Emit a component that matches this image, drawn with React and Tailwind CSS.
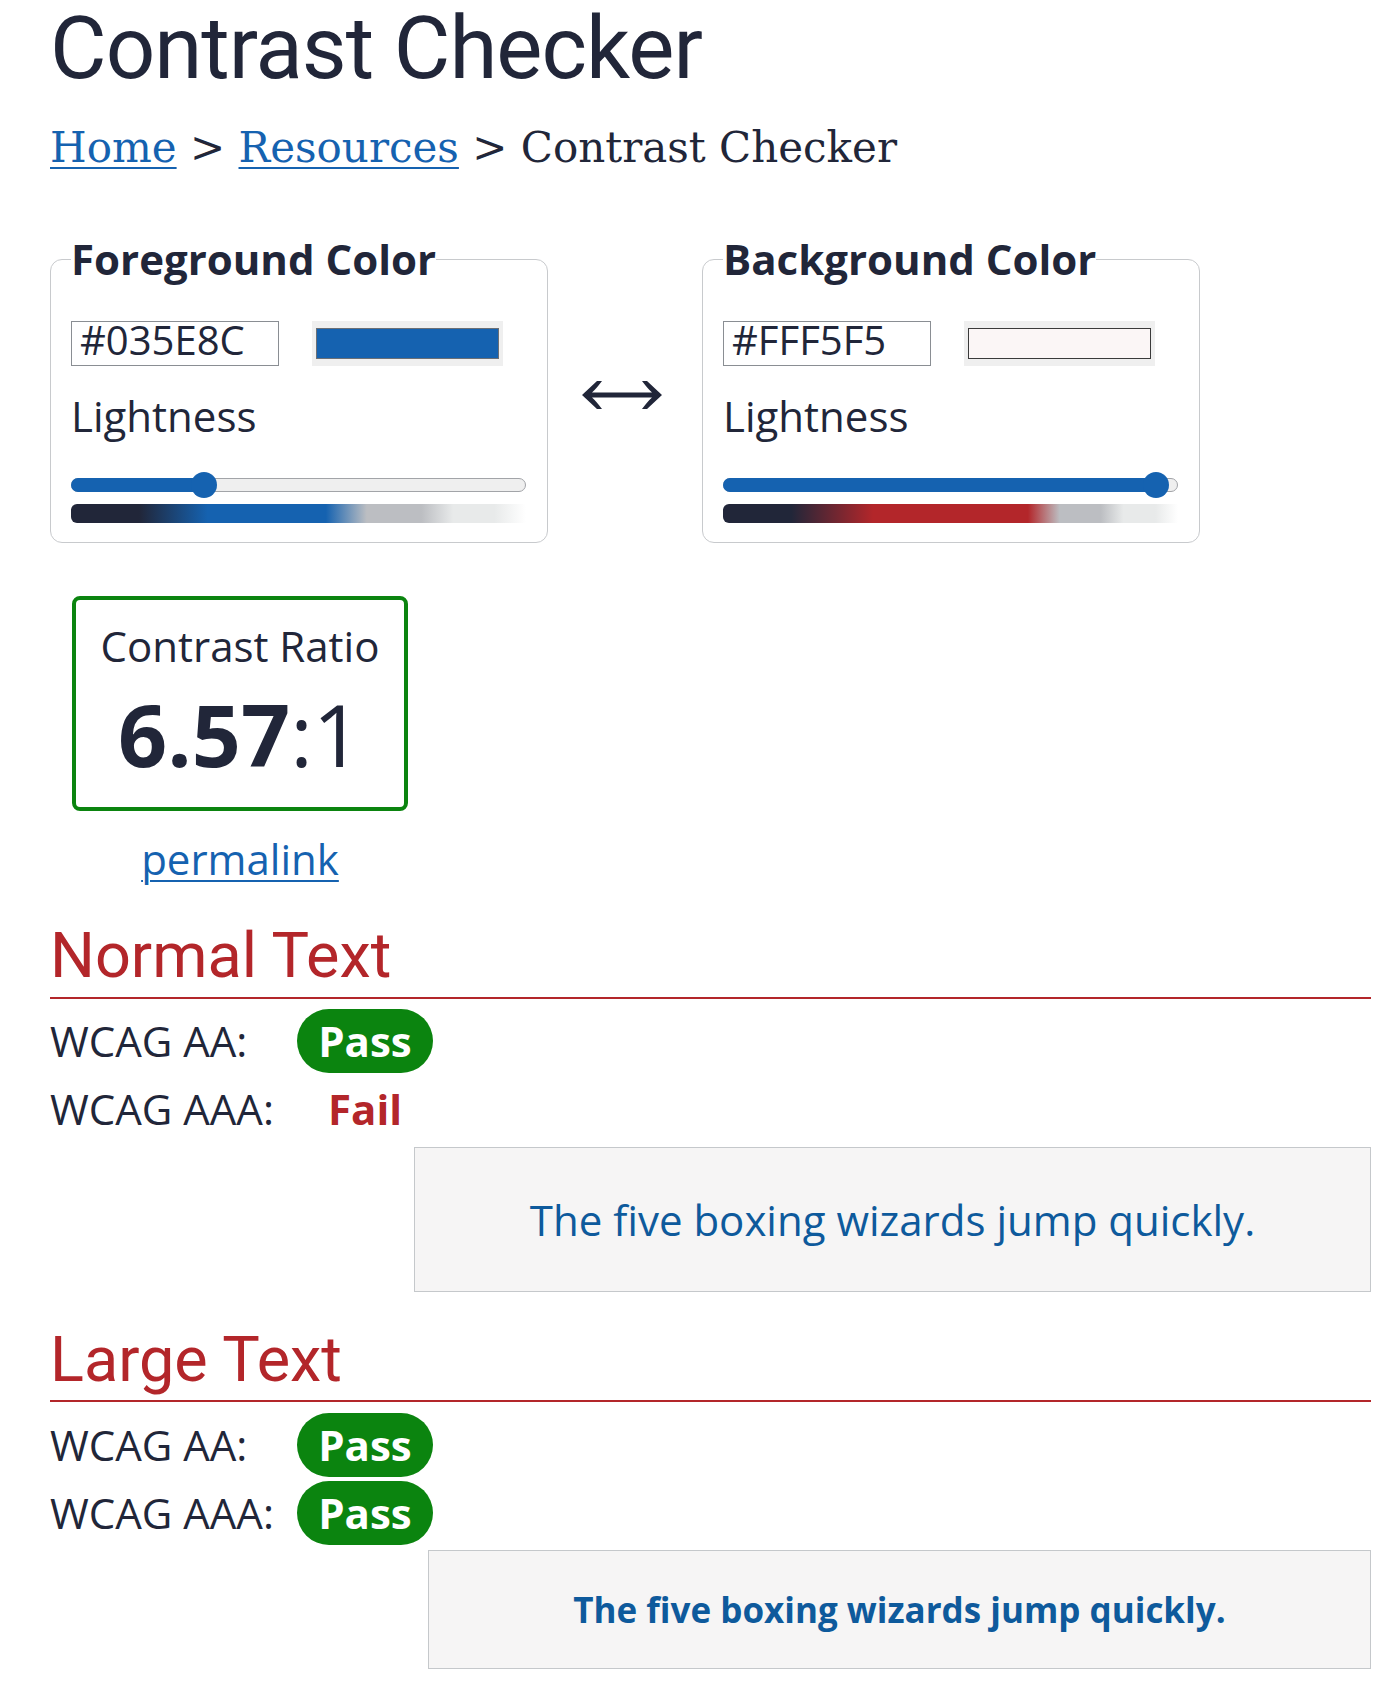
import React from 'react';

const NAVY = 'text-[#212639]';

// lightness slider: thumb moves across (width - thumb)
function Slider({ pct }) {
  const pos = 13 + pct * (455 - 26);
  return (
    <div className="relative mt-[35px] h-[26px] w-[455px]">
      <div className="absolute left-0 right-0 top-[6px] h-[14px] rounded-full border border-[#a2a4a8] bg-[#efefef]" />
      <div
        className="absolute left-0 top-[6px] h-[14px] rounded-l-full bg-[#1562b0]"
        style={{ width: pos }}
      />
      <div
        className="absolute top-0 h-[26px] w-[26px] rounded-full bg-[#1562b0]"
        style={{ left: pos - 13 }}
      />
    </div>
  );
}

function ColorPanel({ title, hex, swatch, swatchBorder, pct, gradient }) {
  return (
    <fieldset className="w-[498px] rounded-[12px] border border-[#c8cacd] px-[20px] pb-[19px]">
      <legend className="text-[42px] font-bold leading-[42px]">{title}</legend>

      <div className="mt-[41px] flex items-start">
        <div className="h-[45px] w-[208px] border border-[#8a8e93] bg-white pl-[8px] text-[40px] leading-[35px]">
          {hex}
        </div>
        <div className="ml-[33px] h-[45px] w-[191px] bg-[#efefef] px-[4px] py-[7px]">
          <div className={`h-[31px] w-full border ${swatch} ${swatchBorder}`} />
        </div>
      </div>

      <div className="mt-[29px] text-[42px] leading-[42px]">Lightness</div>

      <Slider pct={pct} />

      <div className={`mt-[6px] h-[19px] w-[455px] rounded-l-[6px] ${gradient}`} />
    </fieldset>
  );
}

function SwapArrow() {
  return (
    <svg
      width="80"
      height="32"
      viewBox="0 0 80 32"
      className="ml-[34px] mr-[40px] mt-[141px] shrink-0"
      fill="#212639"
    >
      <path d="M0 16 L15 2 L20 2 Q14 10 10 13.5 L70 13.5 Q66 10 60 2 L65 2 L80 16 L65 30 L60 30 Q66 22 70 18.5 L10 18.5 Q14 22 20 30 L15 30 Z" />
    </svg>
  );
}

function ResultRow({ label, pass }) {
  return (
    <div className="flex h-[68px] items-center">
      <div className="w-[247px] text-[42px] leading-[42px]">{label}</div>
      <div className="flex w-[136px] justify-center">
        {pass ? (
          <span className="flex h-[64px] w-[136px] items-center justify-center rounded-full bg-[#0b840f] text-[42px] font-bold leading-[42px] text-white">
            Pass
          </span>
        ) : (
          <span className="text-[42px] font-bold leading-[42px] text-[#b3262a]">
            Fail
          </span>
        )}
      </div>
    </div>
  );
}

function SectionTitle({ children, className = '' }) {
  return (
    <h2
      className={`border-b-2 border-[#b3262a] font-['Roboto',sans-serif] text-[63px] leading-[62px] text-[#b3262a] ${className}`}
    >
      {children}
    </h2>
  );
}

export default function App() {
  return (
    <div
      className={`min-h-[1683px] bg-white pl-[50px] pr-[29px] font-['Open_Sans',sans-serif] ${NAVY}`}
    >
      <h1 className="font-['Roboto',sans-serif] text-[87px] leading-[96px] tracking-[-1px]">
        Contrast Checker
      </h1>

      {/* Breadcrumb */}
      <nav className="mt-[31px] font-['DejaVu_Serif',serif] text-[42px] leading-[42px]">
        <a href="#" className="text-[#1562b0] underline decoration-2 underline-offset-[5px]">
          Home
        </a>
        <span> &gt; </span>
        <a href="#" className="text-[#1562b0] underline decoration-2 underline-offset-[5px]">
          Resources
        </a>
        <span> &gt; Contrast Checker</span>
      </nav>

      {/* Color pickers */}
      <div className="mt-[69px] flex items-start">
        <ColorPanel
          title="Foreground Color"
          hex="#035E8C"
          swatch="bg-[#1562b0]"
          swatchBorder="border-[#6b6f75]"
          pct={0.28}
          gradient="bg-[linear-gradient(to_right,#212639_0%,#212639_15%,#1562b0_30%,#1562b0_56%,#bcbec2_65%,#bcbec2_77%,#e8eaea_84%,#e8eaea_93%,#ffffff_100%)]"
        />
        <SwapArrow />
        <ColorPanel
          title="Background Color"
          hex="#FFF5F5"
          swatch="bg-[#fbf6f6]"
          swatchBorder="border-[#3a3a3a]"
          pct={0.98}
          gradient="bg-[linear-gradient(to_right,#212639_0%,#212639_15%,#b3262a_33%,#b3262a_67%,#bcbec2_74%,#bcbec2_83%,#e8eaea_88%,#e8eaea_95%,#ffffff_100%)]"
        />
      </div>

      {/* Ratio */}
      <div className="ml-[22px] mt-[53px] flex w-[336px] flex-col items-center">
        <div className="flex h-[215px] w-[336px] flex-col items-center rounded-[8px] border-4 border-[#0b840f] pt-[25px]">
          <div className="text-[42px] leading-[42px]">Contrast Ratio</div>
          <div className="mt-[24px] text-[86px] leading-[86px]">
            <span className="font-bold">6.57</span>:1
          </div>
        </div>
        <a
          href="#"
          className="mt-[27px] text-[42px] leading-[42px] text-[#1562b0] underline decoration-2 underline-offset-[5px]"
        >
          permalink
        </a>
      </div>

      {/* Normal text */}
      <SectionTitle className="mt-[45px] pb-[10px]">Normal Text</SectionTitle>
      <div className="mt-[8px]">
        <ResultRow label="WCAG AA:" pass />
        <ResultRow label="WCAG AAA:" pass={false} />
      </div>
      <div className="ml-[364px] mt-[4px] flex h-[145px] items-center justify-center border border-[#c5c8cb] bg-[#f6f5f5] text-[42px] leading-[42px] text-[#0e5a9c]">
        The five boxing wizards jump quickly.
      </div>

      {/* Large text */}
      <SectionTitle className="mt-[37px] pb-[9px]">Large Text</SectionTitle>
      <div className="mt-[9px]">
        <ResultRow label="WCAG AA:" pass />
        <ResultRow label="WCAG AAA:" pass />
      </div>
      <div className="ml-[378px] mt-[3px] flex h-[119px] items-center justify-center border border-[#c5c8cb] bg-[#f6f5f5] text-[35px] font-bold leading-[36px] text-[#0e5a9c]">
        The five boxing wizards jump quickly.
      </div>
    </div>
  );
}
